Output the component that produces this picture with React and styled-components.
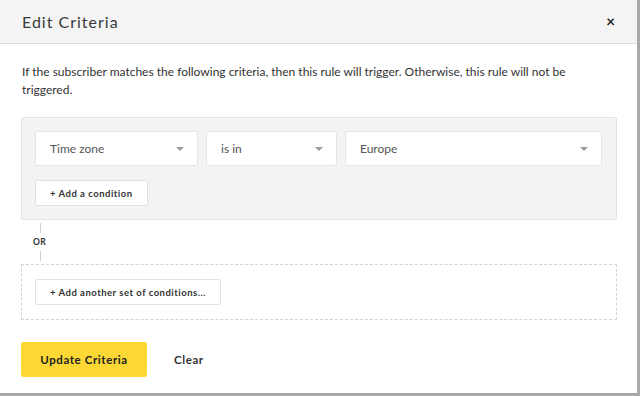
import styled, { createGlobalStyle } from "styled-components"

const Global = createGlobalStyle`
  html, body { margin: 0; padding: 0; background: #fff; }
  body { font-family: "Lato", "Noto Sans", sans-serif; color: #2f2f2f; }
  * { box-sizing: border-box; }
`

const Modal = styled.div`
  width: 640px;
  height: 396px;
  background: #fff;
  border-right: 3px solid #a9a9a9;
  border-bottom: 3px solid #a9a9a9;
  display: flex;
  flex-direction: column;
`

const Header = styled.div`
  height: 44px;
  flex-shrink: 0;
  background: #f4f4f4;
  border-bottom: 1px solid #dcdcdc;
  display: flex;
  align-items: center;
  justify-content: space-between;
  padding: 0 22px 0 22px;
`

const Title = styled.h2`
  margin: 0;
  font-size: 16px;
  font-weight: 400;
  letter-spacing: 1px;
  color: #3a3a3a;
`

const Close = styled.span`
  font-size: 15px;
  font-weight: 700;
  color: #222;
  margin-top: -1px;
`

const Body = styled.div`
  padding: 19px 21px 0 21px;
  display: flex;
  flex-direction: column;
`

const Intro = styled.p`
  margin: 0 0 0 1px;
  max-width: 560px;
  font-size: 12px;
  line-height: 18px;
  color: #333;
`

const Group = styled.div`
  margin-top: 18px;
  background: #f3f3f3;
  border: 1px solid #e3e3e3;
  border-radius: 2px;
  padding: 13px;
  display: flex;
  flex-direction: column;
  gap: 14px;
  width: 596px;
`

const Row = styled.div`
  display: flex;
  gap: 8px;
`

const Select = styled.div`
  width: ${p => p.w}px;
  height: 35px;
  background: #fff;
  border: 1px solid #e6e6e6;
  border-radius: 2px;
  display: flex;
  align-items: center;
  justify-content: space-between;
  padding: 0 13px 0 14px;
  font-size: 12px;
  color: #555;
`

const Caret = styled.span`
  width: 0;
  height: 0;
  border-left: 4px solid transparent;
  border-right: 4px solid transparent;
  border-top: 4px solid #9a9a9a;
`

const SmallButton = styled.div`
  align-self: flex-start;
  display: inline-flex;
  height: 26px;
  background: #fff;
  border: 1px solid #e2e2e2;
  border-radius: 2px;
  align-items: center;
  padding: 0 14px;
  font-size: 9.5px;
  letter-spacing: 0.5px;
  font-weight: 700;
  color: #333;
`

const Or = styled.div`
  margin: 3px 0 3px 12px;
  display: flex;
  flex-direction: column;
  align-items: flex-start;
`

const Line = styled.div`
  width: 1px;
  height: 10px;
  background: #d2d2d2;
  margin-left: 7px;
`

const OrLabel = styled.div`
  font-size: 8.5px;
  font-weight: 700;
  letter-spacing: 0.4px;
  color: #333;
  height: 18px;
  display: flex;
  align-items: center;
`

const Dashed = styled.div`
  width: 596px;
  height: 56px;
  border: 1px dashed #d4d4d4;
  padding: 14px 13px;
  display: flex;
  align-items: flex-start;
`

const Footer = styled.div`
  padding: 22px 21px 0 21px;
  display: flex;
  align-items: center;
  gap: 27px;
`

const Primary = styled.div`
  width: 126px;
  height: 35px;
  background: #fdd835;
  border-radius: 2px;
  display: flex;
  align-items: center;
  justify-content: center;
  font-size: 11.5px;
  letter-spacing: 0.6px;
  font-weight: 700;
  color: #222;
`

const TextButton = styled.div`
  font-size: 11.5px;
  letter-spacing: 0.6px;
  font-weight: 700;
  color: #333;
`

export default function App() {
  return (
    <>
      <Global />
      <Modal>
        <Header>
          <Title>Edit Criteria</Title>
          <Close>×</Close>
        </Header>
        <Body>
          <Intro>
            If the subscriber matches the following criteria, then this rule will trigger. Otherwise, this rule will not be
            triggered.
          </Intro>
          <Group>
            <Row>
              <Select w={163}>Time zone<Caret /></Select>
              <Select w={131}>is in<Caret /></Select>
              <Select w={257}>Europe<Caret /></Select>
            </Row>
            <SmallButton>+ Add a condition</SmallButton>
          </Group>
          <Or>
            <Line />
            <OrLabel>OR</OrLabel>
            <Line />
          </Or>
          <Dashed>
            <SmallButton>+ Add another set of conditions...</SmallButton>
          </Dashed>
        </Body>
        <Footer>
          <Primary>Update Criteria</Primary>
          <TextButton>Clear</TextButton>
        </Footer>
      </Modal>
    </>
  )
}
